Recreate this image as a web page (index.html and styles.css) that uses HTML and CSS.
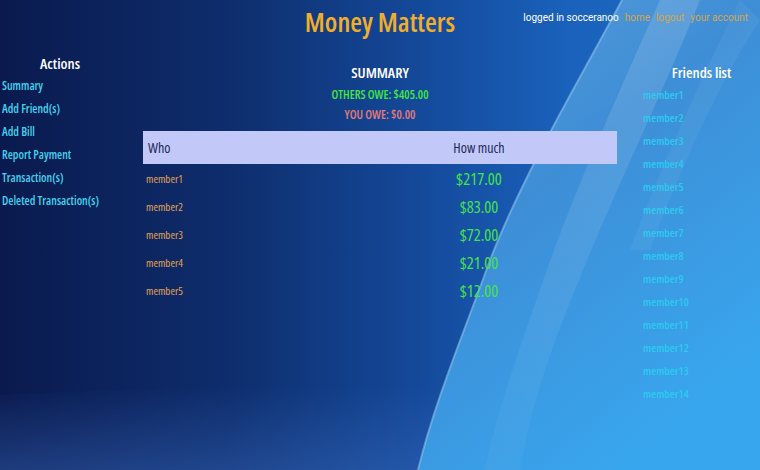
FILE: index.html
```html
<!DOCTYPE html>
<html lang="en">
<head>
<meta charset="utf-8">
<title>Money Matters</title>
<link rel="stylesheet" href="styles.css">
</head>
<body>
<div class="bg" aria-hidden="true">
  <svg viewBox="0 0 760 470" preserveAspectRatio="none" width="760" height="470">
    <defs>
      <linearGradient id="base" x1="0" y1="0" x2="1" y2="0">
        <stop offset="0" stop-color="#0a1a4e"/>
        <stop offset="0.3" stop-color="#0e2d6c"/>
        <stop offset="0.55" stop-color="#14499a"/>
        <stop offset="0.75" stop-color="#1a62bc"/>
        <stop offset="1" stop-color="#1e6cc8"/>
      </linearGradient>
      <linearGradient id="band" x1="0" y1="0" x2="0" y2="1">
        <stop offset="0" stop-color="#3b6cc0" stop-opacity="0"/>
        <stop offset="1" stop-color="#3b6cc0" stop-opacity="0.4"/>
      </linearGradient>
      <linearGradient id="light" x1="0" y1="0" x2="0.6" y2="1">
        <stop offset="0" stop-color="#5c9cd8"/>
        <stop offset="0.45" stop-color="#3e8ed6"/>
        <stop offset="1" stop-color="#38a6ee"/>
      </linearGradient>
      <linearGradient id="streak" x1="0" y1="0" x2="0" y2="1">
        <stop offset="0" stop-color="#ffffff" stop-opacity="0.14"/>
        <stop offset="1" stop-color="#ffffff" stop-opacity="0.03"/>
      </linearGradient>
    </defs>
    <rect width="760" height="470" fill="url(#base)"/>
    <path d="M0,395 C200,385 380,380 560,400 L560,470 L0,470 Z" fill="url(#band)"/>
    <path d="M622,0 C585,70 525,170 490,260 C465,330 435,400 418,470 L760,470 L760,0 Z" fill="url(#light)"/>
    <path d="M660,0 C620,90 570,200 540,290 C515,360 495,420 485,470 L520,470 C530,410 550,350 575,290 C610,200 660,100 700,0 Z" fill="url(#streak)"/>
    <path d="M740,0 C700,80 660,170 630,250 L650,250 C680,170 720,80 760,20 Z" fill="#ffffff" fill-opacity="0.05"/>
    <path d="M622,0 C585,70 525,170 490,260 C465,330 435,400 418,470" fill="none" stroke="#9ccdf2" stroke-opacity="0.5" stroke-width="2"/>
  </svg>
</div>

<div class="page">
  <header class="header">
    <div></div>
    <h1 class="title">Money Matters</h1>
    <div class="userbar">
      <span class="user">logged in socceranoo</span>
      <a class="ulink" href="#">home</a>
      <a class="ulink" href="#">logout</a>
      <a class="ulink" href="#">your account</a>
    </div>
  </header>

  <main class="main">
    <nav class="actions">
      <h2 class="col-title">Actions</h2>
      <ul class="action-list">
        <li><a href="#">Summary</a></li>
        <li><a href="#">Add Friend(s)</a></li>
        <li><a href="#">Add Bill</a></li>
        <li><a href="#">Report Payment</a></li>
        <li><a href="#">Transaction(s)</a></li>
        <li><a href="#">Deleted Transaction(s)</a></li>
      </ul>
    </nav>

    <section class="summary">
      <h2 class="sum-title">SUMMARY</h2>
      <p class="others">OTHERS OWE: $405.00</p>
      <p class="you">YOU OWE: $0.00</p>
      <table class="owe-table">
        <thead>
          <tr><th class="who">Who</th><th class="much">How much</th></tr>
        </thead>
        <tbody>
          <tr><td class="name">member1</td><td class="amt">$217.00</td></tr>
          <tr><td class="name">member2</td><td class="amt">$83.00</td></tr>
          <tr><td class="name">member3</td><td class="amt">$72.00</td></tr>
          <tr><td class="name">member4</td><td class="amt">$21.00</td></tr>
          <tr><td class="name">member5</td><td class="amt">$12.00</td></tr>
        </tbody>
      </table>
    </section>

    <aside class="friends">
      <h2 class="col-title">Friends list</h2>
      <ul class="friend-list">
        <li><a href="#">member1</a></li>
        <li><a href="#">member2</a></li>
        <li><a href="#">member3</a></li>
        <li><a href="#">member4</a></li>
        <li><a href="#">member5</a></li>
        <li><a href="#">member6</a></li>
        <li><a href="#">member7</a></li>
        <li><a href="#">member8</a></li>
        <li><a href="#">member9</a></li>
        <li><a href="#">member10</a></li>
        <li><a href="#">member11</a></li>
        <li><a href="#">member12</a></li>
        <li><a href="#">member13</a></li>
        <li><a href="#">member14</a></li>
      </ul>
    </aside>
  </main>
</div>
</body>
</html>
```

FILE: styles.css
```css
* { box-sizing: border-box; }

html, body {
  margin: 0;
  padding: 0;
  width: 760px;
  height: 470px;
  overflow: hidden;
  background: #0e2d6c;
}

body {
  font-family: "Open Sans", "Noto Sans", sans-serif;
  font-stretch: 75%;
  position: relative;
}

.bg {
  position: absolute;
  inset: 0;
  z-index: 0;
}
.bg svg { display: block; }

.page {
  position: relative;
  z-index: 1;
  width: 760px;
  height: 470px;
}

a { text-decoration: none; }
ul { list-style: none; margin: 0; padding: 0; }
h1, h2, p { margin: 0; }

.header {
  display: grid;
  grid-template-columns: 1fr auto 1fr;
  height: 45px;
}

.title {
  font-size: 27px;
  font-weight: 600;
  color: #f2ae2a;
  line-height: 44px;
}

.userbar {
  justify-self: end;
  padding: 11px 12px 0 0;
  font-family: Roboto, "Liberation Sans", sans-serif;
  font-stretch: 100%;
  font-size: 10px;
  line-height: 13px;
  display: flex;
  gap: 6px;
  white-space: nowrap;
}
.user { color: #ffffff; }
.ulink { color: #d6a64a; }

.main {
  display: flex;
  align-items: flex-start;
}

.actions {
  width: 143px;
  padding-top: 8px;
}
.actions .col-title {
  width: 120px;
  text-align: center;
}

.col-title {
  font-size: 15px;
  font-weight: 600;
  color: #ffffff;
  line-height: 20px;
}

.action-list { padding: 1px 0 0 2px; }
.action-list li {
  font-size: 11.8px;
  line-height: 23px;
}
.action-list a {
  font-weight: 600;
  color: #42d2ee;
}

.summary {
  width: 474px;
  padding-top: 17px;
  text-align: center;
}
.sum-title {
  font-size: 15px;
  font-weight: 600;
  color: #ffffff;
  line-height: 20px;
}
.others, .you {
  font-size: 12px;
  font-weight: 600;
  line-height: 20px;
}
.others { color: #42e646; margin-top: 3px; }
.you { color: #e67a7a; }

.owe-table {
  width: 474px;
  margin-top: 6px;
  border-collapse: collapse;
}
.owe-table th {
  background: #c2c9f8;
  color: #1e2858;
  font-size: 14px;
  font-weight: 400;
  height: 33px;
  padding: 0;
}
.owe-table .who {
  text-align: left;
  padding-left: 5px;
  width: 198px;
}
.owe-table .much { text-align: center; }
.owe-table td {
  height: 28px;
  padding: 0;
}
.owe-table .name {
  text-align: left;
  padding-left: 3px;
  font-size: 11px;
  color: #e6a452;
}
.owe-table .amt {
  text-align: center;
  font-size: 16.5px;
  color: #46e44a;
}

.friends {
  flex: 1;
  padding: 17px 0 0 26px;
}
.friends .col-title { text-align: center; }
.friend-list { padding-top: 1px; }
.friend-list li {
  font-size: 11.5px;
  line-height: 23px;
}
.friend-list a {
  font-weight: 600;
  color: #2ccaf0;
}
```
